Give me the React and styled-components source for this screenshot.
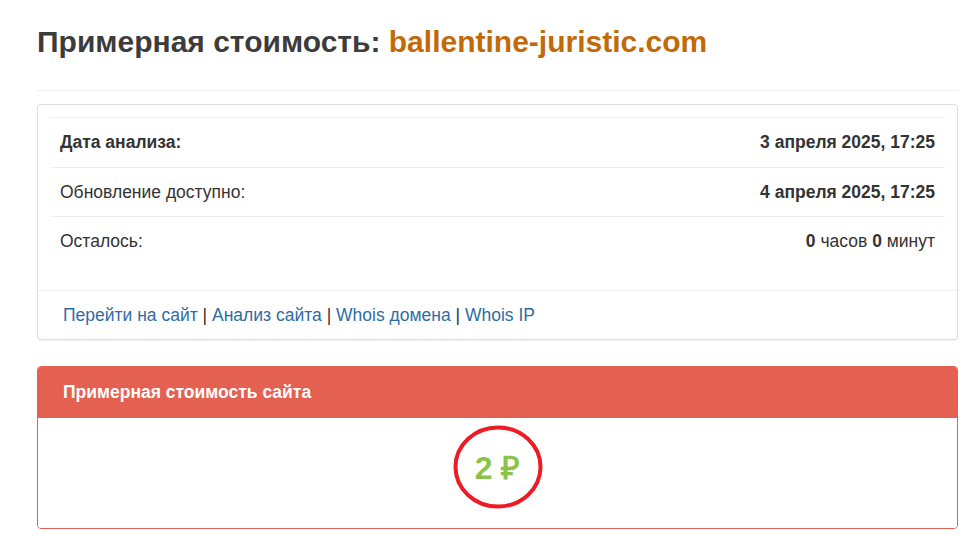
import styled, { createGlobalStyle } from "styled-components";

const GlobalStyle = createGlobalStyle`
  body {
    margin: 0;
    background: #fff;
    font-family: "Liberation Sans", Arial, sans-serif;
    color: #333;
  }
`;

const rows = [
  { label: "Дата анализа:", strongLabel: true, value: <b>3 апреля 2025, 17:25</b> },
  { label: "Обновление доступно:", value: <b>4 апреля 2025, 17:25</b> },
  { label: "Осталось:", value: <><b>0</b> часов <b>0</b> минут</> },
];

const links = ["Перейти на сайт", "Анализ сайта", "Whois домена", "Whois IP"];

function App() {
  return (
    <Page>
      <GlobalStyle />
      <Title>
        Примерная стоимость: <Domain>ballentine-juristic.com</Domain>
      </Title>
      <Divider />
      <Panel>
        <PanelBody>
          <InfoTable>
            <tbody>
              {rows.map((row, idx) => (
                <tr key={idx}>
                  <Cell $bold={row.strongLabel}>{row.label}</Cell>
                  <Cell $right>{row.value}</Cell>
                </tr>
              ))}
            </tbody>
          </InfoTable>
        </PanelBody>
        <PanelFooter>
          {links.map((item, idx) => (
            <span key={idx}>
              {idx > 0 && <Sep> | </Sep>}
              <Link href="#">{item}</Link>
            </span>
          ))}
        </PanelFooter>
      </Panel>
      <PricePanel>
        <PriceHeading>Примерная стоимость сайта</PriceHeading>
        <PriceBody>
          <PriceWrap>
            <Price>2 ₽</Price>
            <Circle viewBox="0 0 90 84">
              <ellipse cx="45" cy="42" rx="42.5" ry="39.5" fill="none" stroke="#ed1c24" strokeWidth="4" />
            </Circle>
          </PriceWrap>
        </PriceBody>
      </PricePanel>
    </Page>
  );
}

export default App;

const Page = styled.div`
  padding: 24px 10px 20px 37px;
`;

const Title = styled.h1`
  margin: 0;
  font-size: 30px;
  line-height: 36px;
  font-weight: 700;
  color: #3c3c3c;
`;

const Domain = styled.span`
  color: #c26a08;
`;

const Divider = styled.hr`
  margin: 30px 0 13px;
  border: 0;
  border-top: 1px solid #eee;
`;

const Panel = styled.div`
  border: 1px solid #ddd;
  border-radius: 4px;
  background: #fff;
  box-shadow: 0 1px 1px rgba(0, 0, 0, 0.05);
`;

const PanelBody = styled.div`
  padding: 12px 12px 24px;
`;

const InfoTable = styled.table`
  width: 100%;
  border-collapse: collapse;
  font-size: 17.5px;
  line-height: 24.5px;
`;

const Cell = styled.td`
  padding: 12px 10px;
  border-top: 1px solid #eee;
  text-align: ${(p) => (p.$right ? "right" : "left")};
  font-weight: ${(p) => (p.$bold ? 700 : 400)};
  color: #333;
`;

const PanelFooter = styled.div`
  border-top: 1px solid #eee;
  padding: 12px 25px 12px;
  font-size: 17.5px;
  line-height: 24.5px;
`;

const Link = styled.a`
  color: #2e6da4;
  text-decoration: none;
`;

const Sep = styled.span`
  color: #333;
`;

const PricePanel = styled.div`
  margin-top: 26px;
  border: 1px solid #e46050;
  border-radius: 4px;
  overflow: hidden;
`;

const PriceHeading = styled.div`
  background: #e46050;
  color: #fff;
  font-weight: 700;
  font-size: 17.5px;
  line-height: 24.5px;
  padding: 13px 25px 13px;
`;

const PriceBody = styled.div`
  display: flex;
  justify-content: center;
  padding: 7px 0 19px;
  background: #fff;
`;

const PriceWrap = styled.div`
  position: relative;
  width: 90px;
  height: 84px;
  display: flex;
  align-items: center;
  justify-content: center;
`;

const Price = styled.span`
  font-size: 32px;
  font-weight: 700;
  color: #8bc34a;
`;

const Circle = styled.svg`
  position: absolute;
  inset: 0;
  width: 90px;
  height: 84px;
`;
